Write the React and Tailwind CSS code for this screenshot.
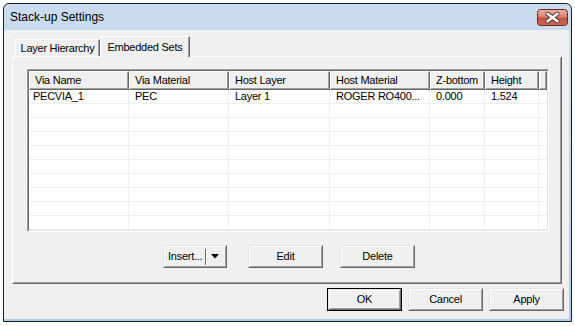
import React from 'react';

const cols = [
  { name: 'Via Name', w: 'w-[100px]', v: 'PECVIA_1', pl: 'pl-[4px]' },
  { name: 'Via Material', w: 'w-[100px]', v: 'PEC', pl: 'pl-[6px]' },
  { name: 'Host Layer', w: 'w-[101px]', v: 'Layer 1', pl: 'pl-[6px]' },
  { name: 'Host Material', w: 'w-[100px]', v: 'ROGER RO400...', pl: 'pl-[6px]' },
  { name: 'Z-bottom', w: 'w-[55px]', v: '0.000', pl: 'pl-[6px]' },
  { name: 'Height', w: 'w-[54px]', v: '1.524', pl: 'pl-[6px]' },
];

function Btn({ children, w, def }) {
  return (
    <div className={`${w} h-[23px] ${def ? 'border border-black' : ''}`}>
      <div className="h-full w-full border border-t-[#e3e3e3] border-l-[#e3e3e3] border-r-[#696969] border-b-[#696969]">
        <div className="flex h-full w-full items-center justify-center border border-t-white border-l-white border-r-[#a0a0a0] border-b-[#a0a0a0] bg-[#f0f0f0] text-[11px] tracking-[-0.25px] text-black">
          {children}
        </div>
      </div>
    </div>
  );
}

function CloseButton() {
  return (
    <svg width="31" height="17" viewBox="0 0 31 17">
      <defs>
        <linearGradient id="cg" x1="0" y1="0" x2="0" y2="1">
          <stop offset="0" stopColor="#eab1a5" />
          <stop offset="0.45" stopColor="#d98272" />
          <stop offset="0.55" stopColor="#c5533f" />
          <stop offset="1" stopColor="#cf6a52" />
        </linearGradient>
      </defs>
      <rect x="0.5" y="0.5" width="30" height="16" rx="3" fill="url(#cg)" stroke="#6e2a22" />
      <path d="M10.5 4.8 L20.5 12.2 M20.5 4.8 L10.5 12.2" stroke="#4d3a36" strokeWidth="4.4" strokeLinecap="round" fill="none" />
      <path d="M10.5 4.8 L20.5 12.2 M20.5 4.8 L10.5 12.2" stroke="#ffffff" strokeWidth="2.4" strokeLinecap="round" fill="none" />
    </svg>
  );
}

export default function App() {
  const rows = Array.from({ length: 10 });
  return (
    <div className="h-[326px] w-[575px] overflow-hidden bg-white pl-[3px] pt-[3px] font-['Liberation_Sans',Arial,sans-serif] text-black">
      <div className="flex h-[319px] w-[569px] flex-col overflow-hidden rounded-t-[6px] border border-[#1f1f1f] bg-gradient-to-b from-[#cbdcf0] via-[#bfd4ed] to-[#a9cdee]">
        {/* Title bar */}
        <div className="flex h-[26px] shrink-0 items-start justify-between">
          <div className="pl-[6px] pt-[6px] text-[12px] leading-[15px]">Stack-up Settings</div>
          <div className="pr-[3px] pt-[5px]">
            <CloseButton />
          </div>
        </div>
        {/* Client */}
        <div className="mb-[2px] mr-[2px] flex flex-1 flex-col bg-[#f0f0f0]">
          <div className="pl-[8px] pr-[7px] pt-[6px]">
            {/* Tabs */}
            <div className="flex h-[20px] items-end pl-[3px]">
              <div className="flex h-[17px] w-[85px] items-center justify-center border border-b-0 border-t-white border-l-white border-r-[#696969] text-[11px] tracking-[-0.25px] shadow-[inset_-1px_0_0_#a0a0a0]">
                Layer Hierarchy
              </div>
              <div className="relative z-10 -mb-[1px] flex h-[21px] w-[90px] items-start justify-center border border-b-0 border-t-white border-l-white border-r-[#696969] bg-[#f0f0f0] pt-[2px] text-[11px] tracking-[-0.25px] shadow-[inset_-1px_0_0_#a0a0a0]">
                Embedded Sets
              </div>
            </div>
            {/* Panel */}
            <div className="h-[228px] w-[550px] border border-t-white border-l-white border-r-[#696969] border-b-[#696969]">
              <div className="h-full w-full border border-transparent border-r-[#a0a0a0] border-b-[#a0a0a0] pl-[13px] pt-[11px]">
                {/* List view */}
                <div className="h-[163px] w-[522px] border border-t-[#a0a0a0] border-l-[#a0a0a0] border-r-white border-b-white">
                  <div className="h-full w-full overflow-hidden border border-t-[#696969] border-l-[#696969] border-r-[#e3e3e3] border-b-[#e3e3e3] bg-white">
                    <div className="flex h-[19px] text-[11px] tracking-[-0.25px]">
                      {cols.map((c) => (
                        <div
                          key={c.name}
                          className={`${c.w} flex shrink-0 items-center border border-t-white border-l-white border-r-[#696969] border-b-[#696969] bg-[#f0f0f0] pl-[5px] shadow-[inset_-1px_-1px_0_#a0a0a0]`}
                        >
                          {c.name}
                        </div>
                      ))}
                      <div className="w-[8px] shrink-0 border border-t-white border-l-white border-r-[#696969] border-b-[#696969] bg-[#f0f0f0] shadow-[inset_-1px_-1px_0_#a0a0a0]" />
                    </div>
                    {rows.map((_, i) => (
                      <div key={i} className="flex h-[14px] border-b border-[#f0f0f0] text-[11px] leading-[13px] tracking-[-0.25px]">
                        {cols.map((c) => (
                          <div key={c.name} className={`${c.w} ${c.pl} shrink-0 overflow-hidden whitespace-nowrap border-r border-[#f0f0f0]`}>
                            {i === 0 ? c.v : ''}
                          </div>
                        ))}
                      </div>
                    ))}
                  </div>
                </div>
                {/* Buttons */}
                <div className="mt-[13px] flex w-[522px] justify-center pl-[2px]">
                  <div className="h-[23px] w-[64px]">
                    <div className="h-full w-full border border-t-[#e3e3e3] border-l-[#e3e3e3] border-r-[#696969] border-b-[#696969]">
                      <div className="flex h-full w-full items-center border border-t-white border-l-white border-r-[#a0a0a0] border-b-[#a0a0a0] bg-[#f0f0f0] text-[11px] tracking-[-0.25px]">
                        <div className="w-[40px] shrink-0 pl-[3px]">Insert...</div>
                        <div className="h-[16px] w-[2px] shrink-0 border-l border-r border-l-[#696969] border-r-white" />
                        <svg className="ml-[4px]" width="8" height="5" viewBox="0 0 8 5">
                          <path d="M0 0 H8 L4 4.5 Z" fill="#000" />
                        </svg>
                      </div>
                    </div>
                  </div>
                  <div className="ml-[21px]">
                    <Btn w="w-[75px]">Edit</Btn>
                  </div>
                  <div className="ml-[17px]">
                    <Btn w="w-[75px]">Delete</Btn>
                  </div>
                </div>
              </div>
            </div>
          </div>
          {/* Bottom buttons */}
          <div className="mt-[4px] flex justify-end gap-[6px] pr-[5px]">
            <Btn w="w-[75px]" def>OK</Btn>
            <Btn w="w-[75px]">Cancel</Btn>
            <Btn w="w-[75px]">Apply</Btn>
          </div>
        </div>
      </div>
    </div>
  );
}
